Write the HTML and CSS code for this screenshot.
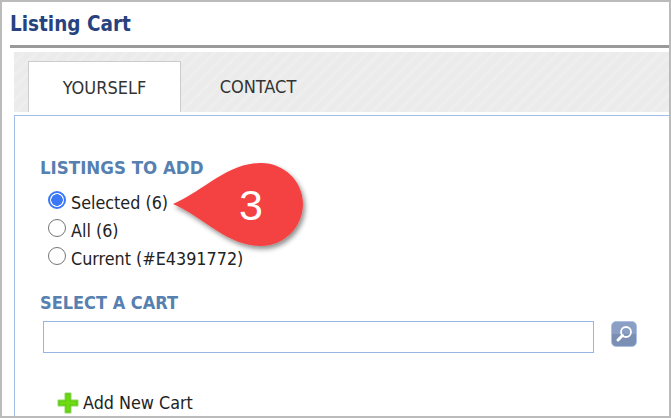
FILE: index.html
```html
<!DOCTYPE html>
<html lang="en">
<head>
<meta charset="utf-8">
<title>Listing Cart</title>
<link rel="stylesheet" href="styles.css">
</head>
<body>
<div class="frame">
  <h1 class="title">Listing Cart</h1>
  <div class="panel">
    <div class="tabs">
      <div class="tab tab-active">YOURSELF</div>
      <div class="tab">CONTACT</div>
    </div>
    <div class="content">
      <h2 class="section-label">LISTINGS TO ADD</h2>
      <div class="radios">
        <label class="radio-row"><input type="radio" name="listings" class="radio" checked>Selected (6)</label>
        <label class="radio-row"><input type="radio" name="listings" class="radio">All (6)</label>
        <label class="radio-row"><input type="radio" name="listings" class="radio">Current (#E4391772)</label>
      </div>
      <h2 class="section-label cart-label">SELECT A CART</h2>
      <div class="cart-row">
        <input type="text" class="cart-input" aria-label="Select a cart">
        <button class="search-btn" aria-label="Search">
          <svg width="22" height="22" viewBox="0 0 22 22"><circle cx="13" cy="9" r="5" fill="none" stroke="#fff" stroke-width="1.800"/><path d="M9.500 12.500 5 17" stroke="#fff" stroke-width="3" stroke-linecap="round"/></svg>
        </button>
      </div>
      <div class="add-row">
        <svg class="plus" width="22" height="22" viewBox="0 0 22 22"><path d="M8 1h6v7h7v6h-7v7H8v-7H1V8h7z" fill="#5fc814" stroke="#8fd95c" stroke-width="1"/><path d="M9.500 3h3v6.500h6.500v3h-6.500v6.500h-3v-6.500H3v-3h6.500z" fill="#6fdc10"/></svg>
        <span>Add New Cart</span>
      </div>
    </div>
  </div>
  <svg class="callout" width="150" height="100" viewBox="0 0 150 100">
    <defs>
      <filter id="shadow" x="-20%" y="-20%" width="140%" height="140%"><feDropShadow dx="2" dy="3" stdDeviation="2.500" flood-color="#000" flood-opacity="0.45"/></filter>
    </defs>
    <path d="M3 44C35 30 57 3 91 3c23 0 42 18 42 41s-19 42-42 42C57 86 35 58 3 44z" fill="#f44343" filter="url(#shadow)"/>
    <text x="81" y="60" class="callout-num">3</text>
  </svg>
</div>
</body>
</html>
```
FILE: styles.css
```css
* { box-sizing: border-box; }
html, body { margin: 0; padding: 0; background: #fff; }
body { width: 671px; height: 418px; overflow: hidden; font-family: "DejaVu Sans", "Noto Sans", sans-serif; font-stretch: condensed; }
.frame {
  position: relative;
  width: 671px;
  height: 418px;
  border: 2px solid #bbb;
  padding-left: 8px;
  overflow: hidden;
  background: #fff;
}
.title {
  margin: 0;
  height: 46px;
  padding-top: 9px;
  font-size: 20.500px;
  line-height: 27px;
  font-weight: 700;
  color: #27437f;
  border-bottom: 3px solid #999;
}
.panel { padding: 4px 0 0 4px; }
.tabs {
  display: flex;
  height: 60px;
  padding: 9px 0 0 14px;
  background: repeating-linear-gradient(135deg, #ebebeb 0 6px, #eeeeee 6px 9px);
}
.tab {
  width: 153px;
  height: 51px;
  display: flex;
  align-items: center;
  justify-content: center;
  font-size: 18px;
  color: #333;
}
.tab-active {
  background: #fff;
  border: 1px solid #ccc;
  border-bottom: 0;
}
.tab + .tab { width: 154px; }
.content {
  margin-top: 3px;
  padding: 41px 0 0 25px;
  border-top: 1px solid #a3bde8;
  border-left: 1px solid #a3bde8;
  height: 320px;
}
.section-label {
  margin: 0;
  font-size: 18.500px;
  line-height: 22px;
  font-weight: 700;
  color: #5680b0;
}
.radios { margin-top: 10px; padding-left: 8px; display: flex; flex-direction: column; }
.radio-row {
  display: flex;
  align-items: center;
  height: 28px;
  padding-bottom: 2px;
  font-size: 17.800px;
  color: #222;
}
.radio {
  appearance: none;
  width: 18px;
  height: 18px;
  margin: -5px 5px 0 0;
  border: 1.500px solid #767676;
  border-radius: 50%;
  background: #fff;
}
.radio:checked {
  border: 2px solid #3b78f7;
  background: radial-gradient(circle, #3b78f7 0 5.500px, #fff 6px);
}
.cart-label { margin-top: 19px; font-size: 18px; }
.cart-row { display: flex; align-items: flex-start; margin-top: 7px; padding-left: 3px; }
.cart-input {
  width: 551px;
  height: 32px;
  border: 1px solid #97b5e3;
  background: #fff;
  padding: 0;
}
.search-btn {
  width: 26px;
  height: 26px;
  margin-left: 17px;
  padding: 1px;
  border: 1px solid #a9c0e8;
  border-radius: 5px;
  background: linear-gradient(#8b9ec4 0 50%, #7a8fb3 50% 100%);
  display: flex;
  align-items: center;
  justify-content: center;
}
.add-row {
  display: flex;
  align-items: center;
  gap: 4px;
  margin-top: 39px;
  padding-left: 17px;
  font-size: 17.800px;
  line-height: 22px;
  color: #222;
}
.callout { position: absolute; left: 168px; top: 158px; }
.callout-num { font-family: "Liberation Sans", sans-serif; font-size: 43px; fill: #fff; text-anchor: middle; }
```
